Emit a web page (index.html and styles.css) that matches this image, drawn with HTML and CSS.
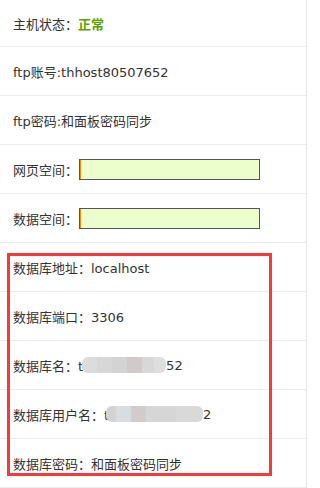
FILE: index.html
```html
<!DOCTYPE html>
<html lang="zh-CN">
<head>
<meta charset="utf-8">
<title>主机信息</title>
<link rel="stylesheet" href="styles.css">
</head>
<body>
<div class="panel">
  <div class="row first">主机状态：<span class="ok">正常</span></div>
  <div class="row">ftp账号:thhost80507652</div>
  <div class="row">ftp密码:和面板密码同步</div>
  <div class="row">网页空间：<span class="field"></span></div>
  <div class="row">数据空间：<span class="field"></span></div>
  <div class="row">数据库地址：localhost</div>
  <div class="row">数据库端口：3306</div>
  <div class="row">数据库名：t<span class="mask mask-a"></span>52</div>
  <div class="row">数据库用户名：t<span class="mask mask-b"></span>2</div>
  <div class="row">数据库密码：和面板密码同步</div>
  <div class="highlight"></div>
</div>
</body>
</html>
```
FILE: styles.css
```css
html, body {
  margin: 0;
  padding: 0;
  background: #fff;
}
body {
  font-family: "DejaVu Sans", "Noto Sans CJK SC", sans-serif;
  font-size: 13px;
  color: #333;
}
.panel {
  position: relative;
  width: 307px;
  border-right: 1px solid #e6e6e6;
  height: 488px;
  box-sizing: border-box;
}
.row {
  height: 48px;
  border-bottom: 1px solid #ececec;
  padding-left: 13px;
  display: flex;
  align-items: center;
  white-space: nowrap;
}
.row.first {
  height: 46px;
}
.ok {
  color: #5fa000;
  font-weight: bold;
}
.field {
  display: inline-block;
  width: 179px;
  height: 19px;
  margin-left: 1px;
  background: #ecfecc;
  border: 1.5px solid #555;
  box-shadow: inset 1px 0 0 #ff8a00;
}
.mask {
  display: inline-block;
  height: 16px;
  border-radius: 6px;
}
.mask-a {
  width: 84px;
  margin-left: -1px;
  background: linear-gradient(to right,
    #dcdcdc 0 15px, #d7d7d7 15px 30px, #d3d3d3 30px 45px,
    #cfcbc8 45px 60px, #d8d8d8 60px 72px, #dedede 72px);
}
.mask-b {
  width: 97px;
  margin-left: -3px;
  background: linear-gradient(to right,
    #d3d3d3 0 10px, #d9dde0 10px 25px, #cfcccb 25px 40px,
    #d6d6d6 40px 70px, #d9d9d9 70px);
}
.highlight {
  position: absolute;
  left: 7px;
  top: 253px;
  width: 265px;
  height: 223px;
  box-sizing: border-box;
  border: 3px solid #f43a3c;
  pointer-events: none;
}
```
